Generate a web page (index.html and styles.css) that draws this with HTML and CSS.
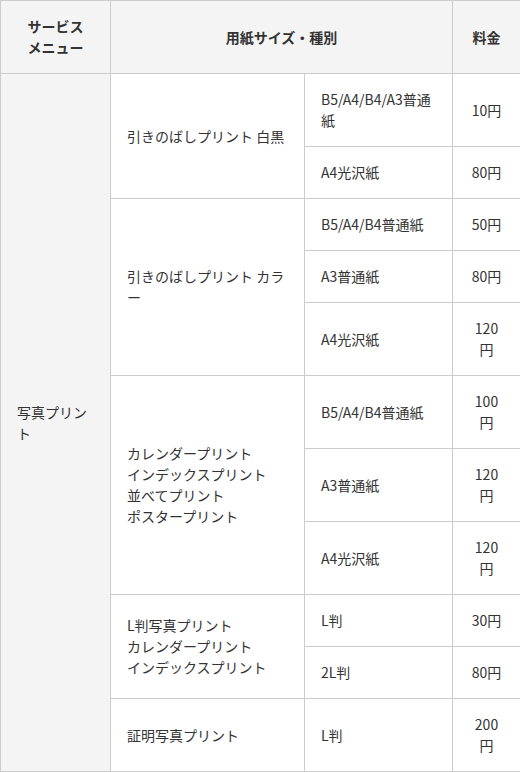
FILE: index.html
```html
<!DOCTYPE html>
<html lang="ja">
<head>
<meta charset="utf-8">
<title>料金表</title>
<link rel="stylesheet" href="styles.css">
</head>
<body>
<table class="price-table">
  <colgroup>
    <col class="c1"><col class="c2"><col class="c3"><col class="c4">
  </colgroup>
  <thead>
    <tr>
      <th>サービス<br>メニュー</th>
      <th colspan="2">用紙サイズ・種別</th>
      <th>料金</th>
    </tr>
  </thead>
  <tbody>
    <tr>
      <td rowspan="11" class="menu">写真プリント</td>
      <td rowspan="2">引きのばしプリント 白黒</td>
      <td>B5/A4/B4/A3普通紙</td>
      <td class="price">10円</td>
    </tr>
    <tr>
      <td>A4光沢紙</td>
      <td class="price">80円</td>
    </tr>
    <tr>
      <td rowspan="3">引きのばしプリント カラー</td>
      <td>B5/A4/B4普通紙</td>
      <td class="price">50円</td>
    </tr>
    <tr>
      <td>A3普通紙</td>
      <td class="price">80円</td>
    </tr>
    <tr>
      <td>A4光沢紙</td>
      <td class="price">120円</td>
    </tr>
    <tr>
      <td rowspan="3">カレンダープリント<br>インデックスプリント<br>並べてプリント<br>ポスタープリント</td>
      <td>B5/A4/B4普通紙</td>
      <td class="price">100円</td>
    </tr>
    <tr>
      <td>A3普通紙</td>
      <td class="price">120円</td>
    </tr>
    <tr>
      <td>A4光沢紙</td>
      <td class="price">120円</td>
    </tr>
    <tr>
      <td rowspan="2">L判写真プリント<br>カレンダープリント<br>インデックスプリント</td>
      <td>L判</td>
      <td class="price">30円</td>
    </tr>
    <tr>
      <td>2L判</td>
      <td class="price">80円</td>
    </tr>
    <tr>
      <td>証明写真プリント</td>
      <td>L判</td>
      <td class="price">200円</td>
    </tr>
  </tbody>
</table>
</body>
</html>
```
FILE: styles.css
```css
html, body {
  margin: 0;
  padding: 0;
  background: #fff;
}
body {
  font-family: "Noto Sans CJK JP", "Noto Sans", sans-serif;
  font-size: 14px;
  line-height: 21px;
  color: #333;
}
.price-table {
  width: 520px;
  border-collapse: collapse;
  table-layout: fixed;
}
.c1 { width: 110px; }
.c2 { width: 194px; }
.c3 { width: 148px; }
.c4 { width: 68px; }
.price-table th,
.price-table td {
  border: 1px solid #ccc;
  padding: 15px 16px;
  vertical-align: middle;
  text-align: left;
  font-weight: normal;
}
.price-table th {
  background: #f4f4f4;
  font-weight: bold;
  text-align: center;
}
.price-table td.menu {
  background: #f4f4f4;
}
.price-table td.price {
  text-align: center;
}
```
